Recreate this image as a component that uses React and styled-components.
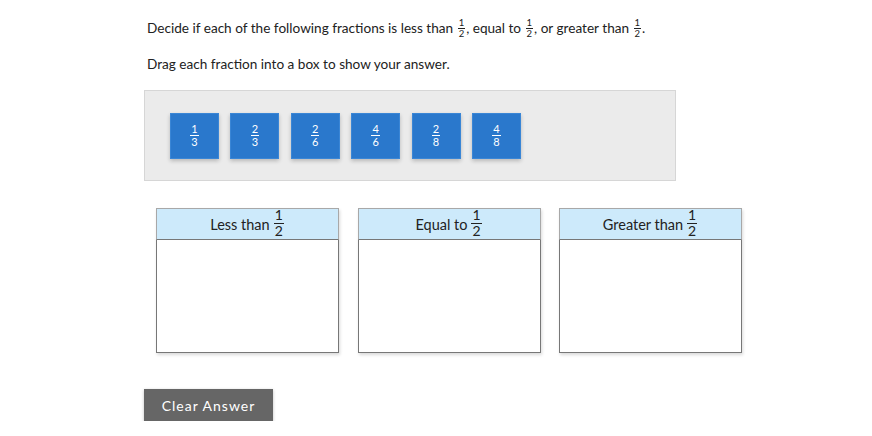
import styled, { createGlobalStyle } from "styled-components"

const GlobalStyle = createGlobalStyle`
  body {
    margin: 0;
    background: #ffffff;
    font-family: Lato, "Open Sans", sans-serif;
    color: #222222;
  }
`

const tiles = [
  [1, 3],
  [2, 3],
  [2, 6],
  [4, 6],
  [2, 8],
  [4, 8],
]

const bins = ["Less than", "Equal to", "Greater than"]

function Frac({ top, bottom, size }) {
  return (
    <FracBox size={size}>
      <Num>{top}</Num>
      <Den>{bottom}</Den>
    </FracBox>
  )
}

export default function App() {
  return (
    <>
      <GlobalStyle />
      <Page>
        <Prompt>
          Decide if each of the following fractions is less than{" "}
          <Frac top="1" bottom="2" size={9.5} />, equal to{" "}
          <Frac top="1" bottom="2" size={9.5} />, or greater than{" "}
          <Frac top="1" bottom="2" size={9.5} />.
        </Prompt>
        <Prompt2>Drag each fraction into a box to show your answer.</Prompt2>

        <Tray>
          {tiles.map(([n, d], i) => (
            <Tile key={i}>
              <Frac top={n} bottom={d} size={11} />
            </Tile>
          ))}
        </Tray>

        <Bins>
          {bins.map((label) => (
            <Bin key={label}>
              <BinHead>
                {label}
                <Frac top="1" bottom="2" size={14} />
              </BinHead>
              <BinBody />
            </Bin>
          ))}
        </Bins>

        <ClearButton>Clear Answer</ClearButton>
      </Page>
    </>
  )
}

const Page = styled.div`
  padding: 16px 0 0 144px;
  width: 600px;
`

const Prompt = styled.p`
  margin: 0 0 0 3px;
  font-size: 13.6px;
  line-height: 24px;
`

const Prompt2 = styled.p`
  margin: 14px 0 0 3px;
  font-size: 13.6px;
  line-height: 20px;
`

const FracBox = styled.span`
  display: inline-flex;
  flex-direction: column;
  align-items: center;
  vertical-align: middle;
  font-size: ${(p) => p.size}px;
  line-height: 1.05;
  margin: 0 1px;
  position: relative;
  top: -1px;
`

const Num = styled.span`
  padding: 0 1px;
  border-bottom: 1px solid currentColor;
`

const Den = styled.span`
  padding: 0 1px;
`

const Tray = styled.div`
  margin-top: 16px;
  width: 532px;
  height: 91px;
  background: #ebebeb;
  border: 1px solid #d6d6d6;
  display: flex;
  align-items: flex-start;
  gap: 11.4px;
  padding: 22px 0 0 25px;
  box-sizing: border-box;
`

const Tile = styled.div`
  width: 49px;
  height: 46px;
  background: #2a78cc;
  border: 1px solid #3a86d6;
  box-sizing: border-box;
  color: #ffffff;
  display: flex;
  align-items: center;
  justify-content: center;
  box-shadow: 0 2px 4px rgba(0, 0, 0, 0.22);
`

const Bins = styled.div`
  display: flex;
  gap: 18.5px;
  margin: 27px 0 0 12px;
`

const Bin = styled.div`
  width: 183px;
  display: flex;
  flex-direction: column;
  box-shadow: 1px 2px 3px rgba(0, 0, 0, 0.15);
`

const BinHead = styled.div`
  height: 32px;
  box-sizing: border-box;
  background: #cdeafb;
  border: 1px solid #a8a8a8;
  border-bottom: 1px solid #777777;
  display: flex;
  align-items: center;
  justify-content: center;
  gap: 3px;
  font-size: 14.5px;
  color: #222222;
`

const BinBody = styled.div`
  height: 112px;
  background: #ffffff;
  border: 1px solid #777777;
  border-top: none;
`

const ClearButton = styled.button`
  margin-top: 36px;
  width: 129px;
  height: 32px;
  background: #666666;
  color: #ffffff;
  border: none;
  font-family: Lato, "Open Sans", sans-serif;
  font-size: 14px;
  letter-spacing: 1px;
  box-shadow: 0 1px 3px rgba(0, 0, 0, 0.25);
`
